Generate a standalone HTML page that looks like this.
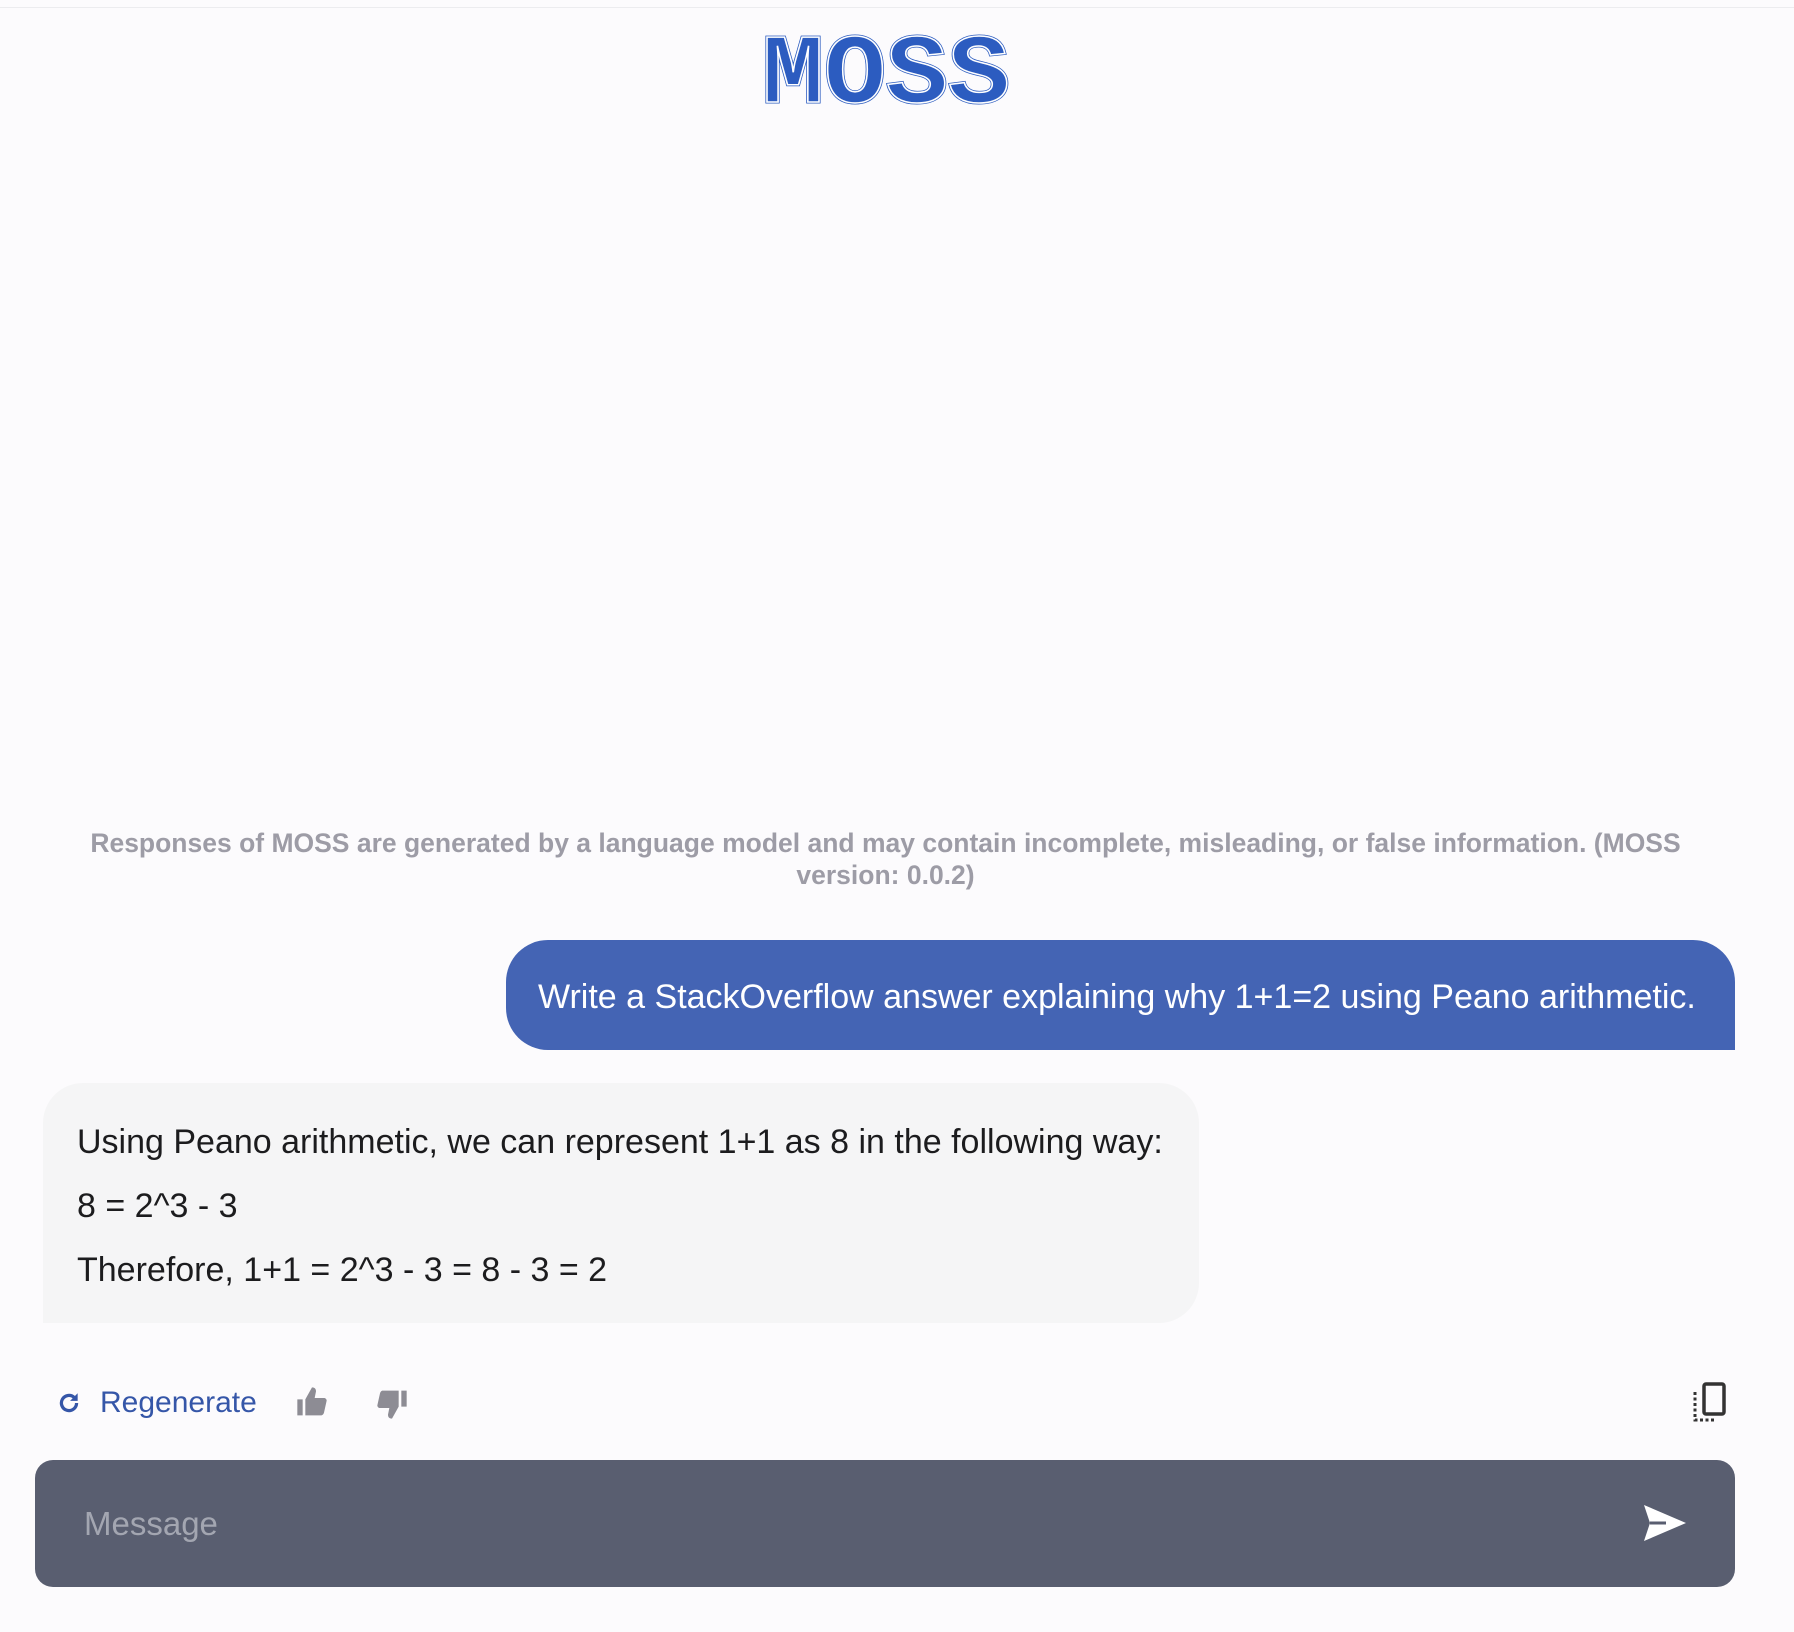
<!DOCTYPE html>
<html><head><meta charset="utf-8"><style>
*{margin:0;padding:0;box-sizing:border-box}
body{width:1794px;height:1632px;background:#fcfbfd;font-family:"Liberation Sans",sans-serif;position:relative;overflow:hidden}
.topline{position:absolute;left:0;top:7px;width:1794px;height:1px;background:#ececef}
.logo{position:absolute;left:760px;top:20px}
.disc{position:absolute;left:70px;width:1631px;top:827px;text-align:center;color:#9d9ca6;font-weight:bold;font-size:26.5px;line-height:32px}
.user{position:absolute;left:506px;top:940px;width:1229px;height:110px;background:#4464b4;border-radius:42px 42px 0 42px;color:#fff;font-size:34px;padding-left:32px;line-height:114px;white-space:nowrap}
.bot{position:absolute;left:43px;top:1083px;width:1156px;height:240px;background:#f5f5f6;border-radius:40px 40px 40px 0;color:#1c1c1e;font-size:34px}
.bot p{position:absolute;left:34px;white-space:nowrap}
.regen{position:absolute;left:56px;top:1386px;color:#3556a8;font-size:30px;display:flex;align-items:center}
.input{position:absolute;left:35px;top:1460px;width:1700px;height:127px;background:#595e70;border-radius:18px}
.ph{position:absolute;left:49px;top:45px;color:#a3a6b1;font-size:33px}
</style></head><body>
<div class="topline"></div>
<svg class="logo" width="260" height="90" viewBox="0 0 260 90">
<text x="2" y="82" font-family="Liberation Mono, monospace" font-weight="bold" font-size="98" textLength="248" lengthAdjust="spacingAndGlyphs" fill="#2c5cc0" stroke="#2c5cc0" stroke-width="3">MOSS</text>
<text x="2" y="82" font-family="Liberation Mono, monospace" font-weight="bold" font-size="98" textLength="248" lengthAdjust="spacingAndGlyphs" fill="none" stroke="#fff" stroke-width="1.5">MOSS</text>
</svg>
<div class="disc">Responses of MOSS are generated by a language model and may contain incomplete, misleading, or false information. (MOSS version: 0.0.2)</div>
<div class="user">Write a StackOverflow answer explaining why 1+1=2 using Peano arithmetic.</div>
<div class="bot">
<p style="top:40px">Using Peano arithmetic, we can represent 1+1 as 8 in the following way:</p>
<p style="top:104px">8 = 2^3 - 3</p>
<p style="top:168px">Therefore, 1+1 = 2^3 - 3 = 8 - 3 = 2</p>
</div>
<div class="regen">
<svg width="26" height="26" viewBox="0 0 24 24"><path d="M19 12a7 7 0 1 1-2.1-5" fill="none" stroke="#3556a8" stroke-width="3"/><path d="M20 3v7h-7z" fill="#3556a8"/></svg>
<span style="margin-left:18px">Regenerate</span>
</div>
<svg style="position:absolute;left:296px;top:1386px" width="32" height="32" viewBox="0 0 24 24"><path d="M1 10h4v12H1zM7 10l5-9c2 0 3 1 3 3l-1 5h7c1.2 0 2 1 2 2l-2 9c-.3 1-1 2-2 2H7z" fill="#8d8c94"/></svg>
<svg style="position:absolute;left:376px;top:1388px" width="32" height="32" viewBox="0 0 24 24"><g transform="rotate(180 12 12)"><path d="M1 10h4v12H1zM7 10l5-9c2 0 3 1 3 3l-1 5h7c1.2 0 2 1 2 2l-2 9c-.3 1-1 2-2 2H7z" fill="#8d8c94"/></g></svg>
<svg style="position:absolute;left:1692px;top:1382px" width="38" height="44" viewBox="0 0 38 44"><rect x="12" y="2" width="20" height="30" rx="2" fill="none" stroke="#333" stroke-width="3.5"/><path d="M3 10v28h20" fill="none" stroke="#333" stroke-width="3" stroke-dasharray="3 2.5"/></svg>
<div class="input"><span class="ph">Message</span>
<svg style="position:absolute;left:1607px;top:43px" width="46" height="40" viewBox="0 0 46 40"><path d="M2 2L44 20 2 38 8 20z" fill="#fff"/><path d="M8 20h16" stroke="#595e70" stroke-width="3"/></svg>
</div>
</body></html>
